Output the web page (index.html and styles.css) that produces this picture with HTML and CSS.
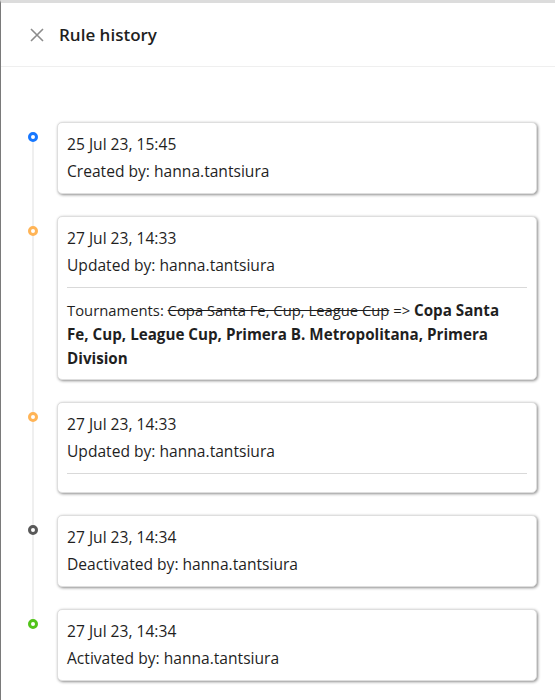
FILE: index.html
```html
<!DOCTYPE html>
<html lang="en">
<head>
<meta charset="utf-8">
<title>Rule history</title>
<link rel="stylesheet" href="styles.css">
</head>
<body>
<div class="drawer">
  <header class="drawer-header">
    <button class="close" aria-label="Close">
      <svg width="14" height="14" viewBox="0 0 14 14"><path d="M1 1L13 13M13 1L1 13" stroke="#8c8c8c" stroke-width="1.6" fill="none"/></svg>
    </button>
    <h1 class="title">Rule history</h1>
  </header>
  <main class="drawer-body">
    <ul class="timeline">
      <li class="item">
        <span class="dot dot-blue"></span>
        <div class="card">
          <div class="line">25 Jul 23, 15:45</div>
          <div class="line">Created by: hanna.tantsiura</div>
        </div>
      </li>
      <li class="item">
        <span class="dot dot-orange"></span>
        <div class="card">
          <div class="line">27 Jul 23, 14:33</div>
          <div class="line">Updated by: hanna.tantsiura</div>
          <div class="changes">
            <p class="change">Tournaments: <s>Copa Santa Fe, Cup, League Cup</s> =&gt; <b>Copa Santa Fe, Cup, League Cup, Primera B. Metropolitana, Primera Division</b></p>
          </div>
        </div>
      </li>
      <li class="item">
        <span class="dot dot-orange"></span>
        <div class="card">
          <div class="line">27 Jul 23, 14:33</div>
          <div class="line">Updated by: hanna.tantsiura</div>
          <div class="changes"></div>
        </div>
      </li>
      <li class="item">
        <span class="dot dot-gray"></span>
        <div class="card">
          <div class="line">27 Jul 23, 14:34</div>
          <div class="line">Deactivated by: hanna.tantsiura</div>
        </div>
      </li>
      <li class="item last">
        <span class="dot dot-green"></span>
        <div class="card">
          <div class="line">27 Jul 23, 14:34</div>
          <div class="line">Activated by: hanna.tantsiura</div>
        </div>
      </li>
    </ul>
  </main>
</div>
</body>
</html>
```
FILE: styles.css
```css
* { box-sizing: border-box; }
html, body { margin: 0; padding: 0; background: #fff; }
body {
  font-family: "Open Sans", "Noto Sans", "Liberation Sans", sans-serif;
  color: #1f1f1f;
  width: 555px;
  height: 700px;
  overflow: hidden;
}
.drawer {
  height: 700px;
  border-top: 3px solid #dcdcdc;
  border-left: 1px solid #7a7a7a;
}
.drawer-header {
  height: 64px;
  display: flex;
  align-items: center;
  padding-left: 28px;
  border-bottom: 1px solid #efefef;
}
.close {
  width: 16px;
  height: 16px;
  padding: 0;
  border: 0;
  background: none;
  display: flex;
  align-items: center;
  justify-content: center;
  margin-right: 14px;
}
.title {
  margin: 0;
  font-size: 17px;
  font-weight: 600;
  color: #1f1f1f;
}
.drawer-body {
  padding: 55px 18px 0 0;
}
.timeline {
  list-style: none;
  margin: 0;
  padding: 0;
}
.item {
  position: relative;
  padding-left: 56px;
  padding-bottom: 22px;
}
.item::before {
  content: "";
  position: absolute;
  left: 31px;
  top: 15px;
  bottom: -15px;
  width: 2px;
  background: #efefef;
}
.item.last::before { display: none; }
.dot {
  position: absolute;
  left: 27px;
  top: 10px;
  width: 10px;
  height: 10px;
  border-radius: 50%;
  border: 3px solid;
  background: #fff;
  z-index: 1;
}
.dot-blue { border-color: #1677ff; }
.dot-orange { border-color: #ffb456; }
.dot-gray { border-color: #595959; }
.dot-green { border-color: #52c41a; }
.card {
  border: 1px solid #dedede;
  border-radius: 5px;
  padding: 8px 9px 8px;
  box-shadow: 1px 1px 3px rgba(0, 0, 0, 0.45);
  background: #fff;
}
.line {
  font-size: 15.6px;
  line-height: 27px;
}
.changes {
  margin-top: 8px;
  border-top: 1px solid #d9d9d9;
  padding-top: 10px;
}
.change {
  margin: 0;
  padding-right: 18px;
  padding-bottom: 1px;
  font-size: 14.8px;
  line-height: 24px;
}
.change s { text-decoration-color: #1f1f1f; }
.change b { font-weight: 700; font-size: 15.2px; }
```
